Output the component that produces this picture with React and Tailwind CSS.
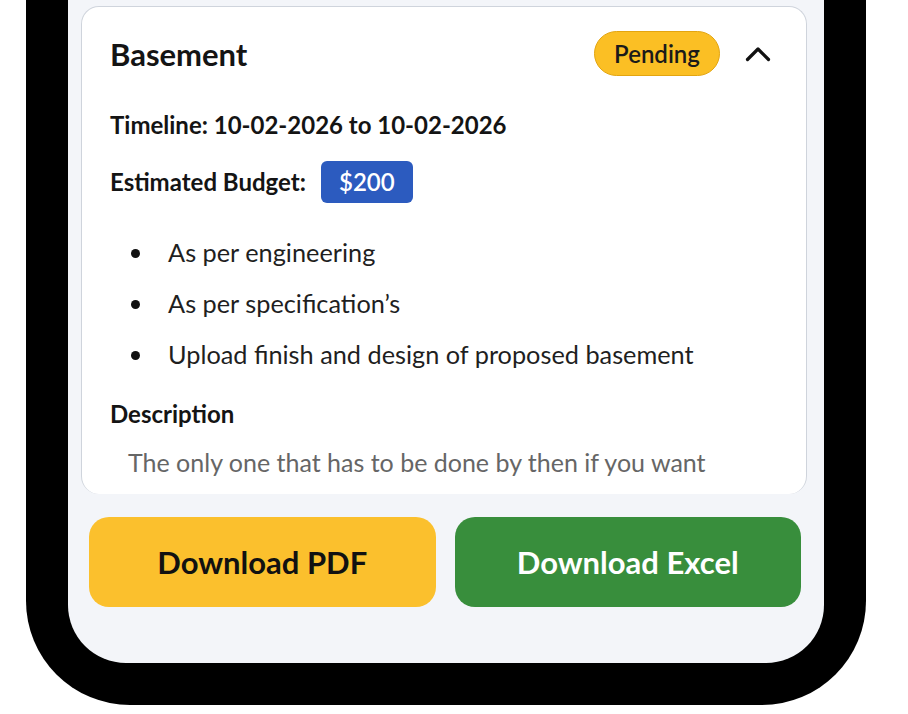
import React from 'react'

const font = { fontFamily: 'Lato, "Noto Sans", sans-serif' }

const items = [
  'As per engineering',
  'As per specification’s',
  'Upload finish and design of proposed basement',
]

function ChevronUp() {
  return (
    <svg width="26" height="17" viewBox="0 0 26 17" fill="none">
      <path d="M2.5 14.5 L13 4 L23.5 14.5" stroke="#111" strokeWidth="3.2" strokeLinecap="round" strokeLinejoin="round" />
    </svg>
  )
}

export default function App() {
  return (
    <div className="w-[908px] h-[714px] bg-white overflow-hidden" style={font}>
      <div className="ml-[26px] w-[840px] h-[705px] bg-black rounded-b-[104px] px-[42px] pb-[42px]">
        <div className="h-[663px] bg-[#f3f5f9] rounded-b-[58px] pt-[6px] flex flex-col">
          {/* card */}
          <div className="ml-[13px] mr-[17px] h-[488px] bg-white border border-b-0 border-[#cfd4dc] rounded-[18px] pt-[24px] pl-[28px] pr-[35px]">
            <div className="flex items-center h-[45px]">
              <h2 className="text-[31px] leading-[36px] font-bold text-[#141414] flex-1">Basement</h2>
              <span className="h-[45px] w-[126px] flex items-center justify-center rounded-full bg-[#fbbf24] border border-[#e3a510] text-[24px] font-semibold text-[#1a1a1a]">
                Pending
              </span>
              <span className="ml-[25px] flex items-center">
                <ChevronUp />
              </span>
            </div>

            <p className="mt-[35px] text-[24px] leading-[28px] font-bold text-[#141414]">
              Timeline: 10-02-2026 to 10-02-2026
            </p>

            <div className="mt-[22px] flex items-center h-[42px]">
              <span className="text-[24px] font-bold text-[#141414]">Estimated Budget:</span>
              <span className="ml-[15px] h-[42px] w-[92px] flex items-center justify-center rounded-[6px] bg-[#2c5bbf] text-white text-[24px] font-semibold">
                $200
              </span>
            </div>

            <ul className="mt-[35px] flex flex-col gap-[21px]">
              {items.map((t) => (
                <li key={t} className="flex items-center h-[30px] text-[25.3px] text-[#1f1f1f]">
                  <span className="ml-[21px] w-[9px] h-[9px] rounded-full bg-[#111]" />
                  <span className="ml-[28px]">{t}</span>
                </li>
              ))}
            </ul>

            <p className="mt-[30px] text-[24px] leading-[28px] font-bold text-[#141414]">Description</p>
            <p className="mt-[19px] pl-[18px] text-[25px] leading-[30px] text-[#666]">
              The only one that has to be done by then if you want
            </p>
          </div>

          {/* actions */}
          <div className="mt-[23px] ml-[21px] mr-[23px] flex gap-[19px]">
            <button className="flex-1 h-[90px] rounded-[20px] bg-[#fbc02d] text-[31px] font-bold text-[#111]">
              Download PDF
            </button>
            <button className="flex-1 h-[90px] rounded-[20px] bg-[#388e3c] text-[31px] font-bold text-white">
              Download Excel
            </button>
          </div>
        </div>
      </div>
    </div>
  )
}
